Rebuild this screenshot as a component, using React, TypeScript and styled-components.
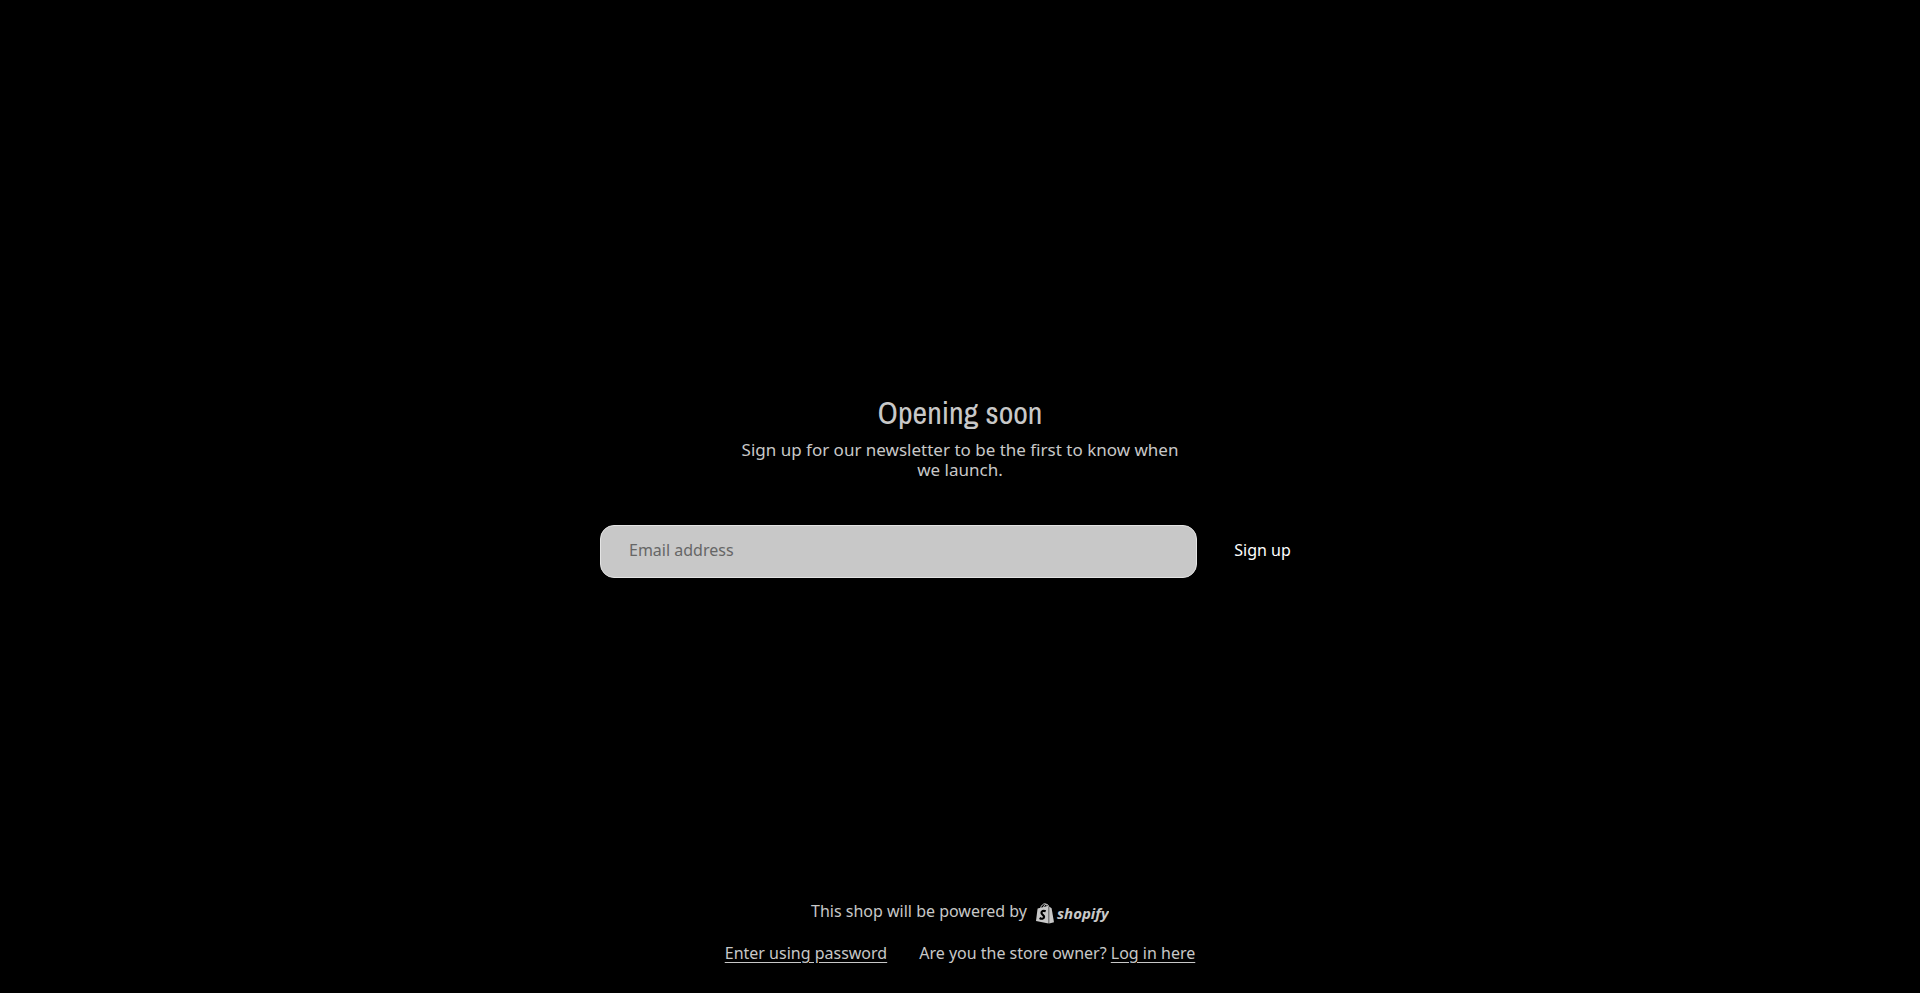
import React from "react";
import styled, { createGlobalStyle } from "styled-components";

const GlobalStyle = createGlobalStyle`
  *, *::before, *::after { box-sizing: border-box; }
  body {
    margin: 0;
    background: #000;
    color: #c8c8c8;
    font-family: "Noto Sans", "Open Sans", sans-serif;
    font-size: 16px;
    line-height: 20px;
  }
`;

const Page = styled.div`
  min-height: 100vh;
  display: flex;
  flex-direction: column;
`;

const Main = styled.main`
  flex: 1;
  display: flex;
  flex-direction: column;
  align-items: center;
  justify-content: center;
  padding: 69px 20px 0;
`;

const Title = styled.h1`
  margin: 0;
  font-family: "Liberation Sans Narrow", "Archivo Narrow", "Liberation Sans", sans-serif;
  font-size: 32px;
  line-height: 40px;
  font-weight: 400;
`;

const Intro = styled.p`
  margin: 7px 0 45px;
  max-width: 448px;
  font-size: 17px;
  text-align: center;
`;

const SignupForm = styled.form`
  display: flex;
  gap: 8px;
  width: 100%;
  max-width: 720px;
`;

const EmailInput = styled.input`
  flex: 1;
  min-width: 0;
  height: 53px;
  padding: 0 28px 2px;
  border: 1px solid #e4e4e4;
  border-radius: 14px;
  background: #c8c8c8;
  color: #333;
  font: inherit;
  &::placeholder { color: #666; opacity: 1; }
`;

const SubmitButton = styled.button`
  width: 115px;
  padding: 0 0 2px;
  border: 0;
  border-radius: 14px;
  background: #000;
  color: #fff;
  font: inherit;
  cursor: pointer;
`;

const Footer = styled.footer`
  display: flex;
  flex-direction: column;
  align-items: center;
  gap: 18px;
  padding: 0 20px 30px;
`;

const FooterRow = styled.div<{ $gap: number }>`
  display: flex;
  flex-wrap: wrap;
  justify-content: center;
  gap: ${(p) => p.$gap}px;
`;

const TextLink = styled.a`
  color: inherit;
  text-decoration: underline;
  text-underline-offset: 3px;
`;

const LogoLink = styled.a`
  display: flex;
  padding-top: 2px;
  color: inherit;
`;

const ShopifyLogo = () => (
  <svg width="73" height="22" viewBox="0 0 73 22" role="img" aria-label="Shopify">
    <path fill="currentColor" d="M1.6 5.6 L12.6 2.8 L12.6 20.4 L0 18 Z" />
    <path fill="currentColor" d="M13.2 3.4 L15.6 5.2 L18 19.2 L13.2 20.4 Z" />
    <path fill="none" stroke="currentColor" strokeWidth="1" d="M4.5 5.4 C5.2 2.3 7.4 .6 9 .8 C10.8 1 11.2 2.4 11.2 4 M7.4 4.6 C7.8 2.4 9.4 1.1 10.8 1.3 C12 1.5 12.4 2.4 12.6 3.4" />
    <path fill="none" stroke="#000" strokeWidth="2.2" d="M9.7 8.2 C7.4 7.2 5.4 8.2 5.5 10 C5.6 11.8 8.3 12 8.1 14 C7.9 16 5.6 16.2 3.6 15" />
    <text x="21" y="16" fill="currentColor" fontFamily="Open Sans, sans-serif" fontSize="15" fontWeight="700" fontStyle="italic">shopify</text>
  </svg>
);

export default function App() {
  return (
    <>
      <GlobalStyle />
      <Page>
        <Main>
          <Title>Opening soon</Title>
          <Intro>Sign up for our newsletter to be the first to know when we launch.</Intro>
          <SignupForm onSubmit={(e) => e.preventDefault()}>
            <EmailInput type="email" placeholder="Email address" aria-label="Email address" />
            <SubmitButton type="submit">Sign up</SubmitButton>
          </SignupForm>
        </Main>
        <Footer>
          <FooterRow $gap={9}>
            <span>This shop will be powered by</span>
            <LogoLink href="#shopify"><ShopifyLogo /></LogoLink>
          </FooterRow>
          <FooterRow $gap={32}>
            <TextLink href="#password">Enter using password</TextLink>
            <span>
              Are you the store owner? <TextLink href="#login">Log in here</TextLink>
            </span>
          </FooterRow>
        </Footer>
      </Page>
    </>
  );
}
